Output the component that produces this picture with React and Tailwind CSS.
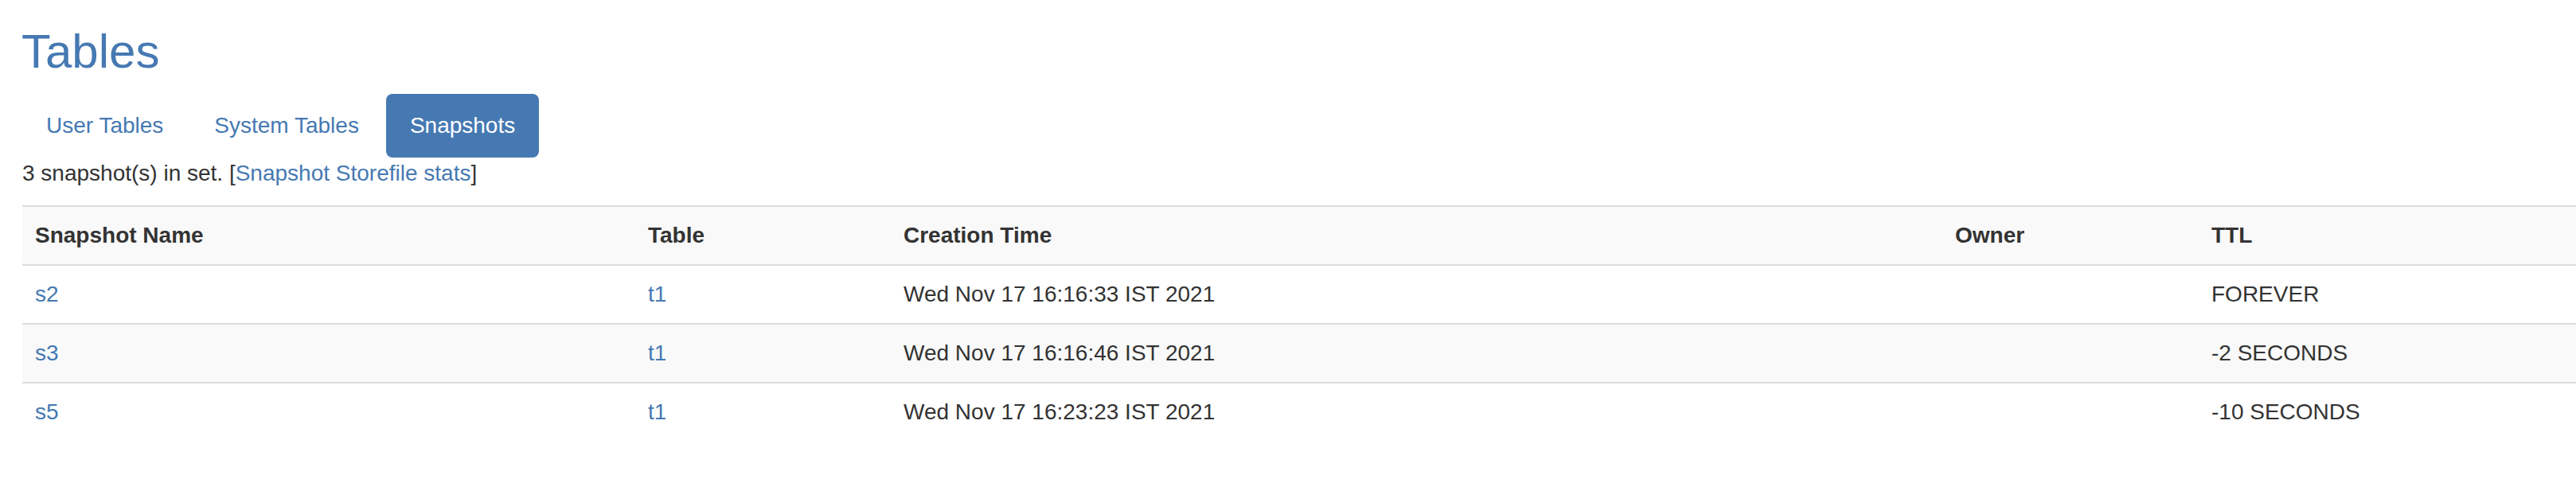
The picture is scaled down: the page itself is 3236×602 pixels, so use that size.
import React from 'react';

const snapshots = [
  { name: 's2', table: 't1', created: 'Wed Nov 17 16:16:33 IST 2021', owner: '', ttl: 'FOREVER' },
  { name: 's3', table: 't1', created: 'Wed Nov 17 16:16:46 IST 2021', owner: '', ttl: '-2 SECONDS' },
  { name: 's5', table: 't1', created: 'Wed Nov 17 16:23:23 IST 2021', owner: '', ttl: '-10 SECONDS' },
];

const tabs = [
  { label: 'User Tables', active: false },
  { label: 'System Tables', active: false },
  { label: 'Snapshots', active: true },
];

export const App = () => {
  return (
    <div className="min-h-screen bg-white font-['Liberation_Sans',Arial,sans-serif] text-[28px] leading-[40px] text-[#333] overflow-hidden">
      <div className="pl-[28px] pt-[32px]">
        <h1 className="text-[60px] leading-[66px] text-[#4679b2] mb-[20px] -ml-[1px]">Tables</h1>

        {/* Tabs */}
        <ul className="flex gap-[4px]">
          {tabs.map((tab) => (
            <li key={tab.label}>
              <a
                href="#"
                className={
                  tab.active
                    ? 'block px-[30px] py-[20px] rounded-[8px] bg-[#4679b2] text-white'
                    : 'block px-[30px] py-[20px] rounded-[8px] text-[#4679b2]'
                }
              >
                {tab.label}
              </a>
            </li>
          ))}
        </ul>

        <p className="mb-[20px]">
          3 snapshot(s) in set. [<a href="#" className="text-[#4679b2]">Snapshot Storefile stats</a>]
        </p>

        <table className="w-full table-fixed border-collapse text-left">
          <thead>
            <tr className="bg-[#f9f9f9]">
              <th className="w-[770px] px-[16px] py-[16px] font-bold border-y-2 border-[#ddd]">Snapshot Name</th>
              <th className="w-[321px] px-[16px] py-[16px] font-bold border-y-2 border-[#ddd]">Table</th>
              <th className="w-[1321px] px-[16px] py-[16px] font-bold border-y-2 border-[#ddd]">Creation Time</th>
              <th className="w-[322px] px-[16px] py-[16px] font-bold border-y-2 border-[#ddd]">Owner</th>
              <th className="px-[16px] py-[16px] font-bold border-y-2 border-[#ddd]">TTL</th>
            </tr>
          </thead>
          <tbody>
            {snapshots.map((s, i) => (
              <tr key={s.name} className={i % 2 === 1 ? 'bg-[#f9f9f9]' : 'bg-white'}>
                <td className="px-[16px] py-[16px] border-t-2 border-[#ddd]">
                  <a href="#" className="text-[#4679b2]">{s.name}</a>
                </td>
                <td className="px-[16px] py-[16px] border-t-2 border-[#ddd]">
                  <a href="#" className="text-[#4679b2]">{s.table}</a>
                </td>
                <td className="px-[16px] py-[16px] border-t-2 border-[#ddd]">{s.created}</td>
                <td className="px-[16px] py-[16px] border-t-2 border-[#ddd]">{s.owner}</td>
                <td className="px-[16px] py-[16px] border-t-2 border-[#ddd]">{s.ttl}</td>
              </tr>
            ))}
          </tbody>
        </table>
      </div>
    </div>
  );
};

export default App;
